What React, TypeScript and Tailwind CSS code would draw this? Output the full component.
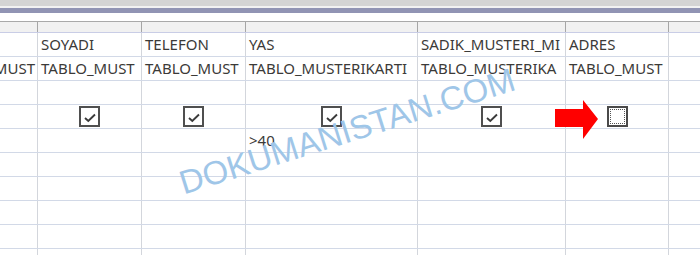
const cols = ["w-[38px]", "w-[104px]", "w-[104px]", "w-[172px]", "w-[148px]", "w-[103px]", "flex-1"];

const fields = ["", "SOYADI", "TELEFON", "YAS", "SADIK_MUSTERI_MI", "ADRES", ""];
const tables = ["TABLO_MUST", "TABLO_MUST", "TABLO_MUST", "TABLO_MUSTERIKARTI", "TABLO_MUSTERIKA", "TABLO_MUST", ""];
const shown = [null, true, true, true, true, false, null];

function CheckBox({ checked }: { checked: boolean }) {
  if (!checked) {
    return (
      <div className="flex h-[21px] w-[21px] items-center justify-center border-2 border-[#4a4a4a] bg-white">
        <div className="h-[15px] w-[15px] border border-dotted border-[#555]" />
      </div>
    );
  }
  return (
    <div className="flex h-[21px] w-[21px] items-center justify-center border-2 border-[#4f4f4f] bg-white">
      <svg width="12" height="10" viewBox="0 0 12 10" className="mt-[2px]">
        <path d="M1 5 L4.3 8 L11 1.5" fill="none" stroke="#3a3a3a" strokeWidth="1.9" />
      </svg>
    </div>
  );
}

function Row({ children, last }: { children: React.ReactNode[]; last?: boolean }) {
  return (
    <div className={`flex h-[24px] ${last ? "" : "border-b border-[#d2d9e7]"}`}>
      {children.map((c, i) => (
        <div
          key={i}
          className={`${cols[i]} flex h-full shrink-0 items-center overflow-hidden whitespace-nowrap ${i < 6 ? "border-r border-[#d3d6dc]" : ""}`}
        >
          {c}
        </div>
      ))}
    </div>
  );
}

export default function App() {
  return (
    <div
      className="relative h-[255px] w-[700px] overflow-hidden bg-white text-[15px] text-[#3b3a38]"
      style={{ fontFamily: '"Noto Sans", "Open Sans", sans-serif' }}
    >
      <div className="h-[6px] bg-[#d4d4d4]" />
      <div className="h-[2px] bg-[#f2f2f2]" />
      <div className="h-[5px] bg-[#9194b4]" />
      <div className="h-[8px] bg-white" />

      {/* column selector band */}
      <div className="flex h-[12px] border-y border-t-[#a9a9a9] border-b-[#c9cde6] border-b-dotted bg-[#f1f1f1]">
        {cols.map((c, i) => (
          <div key={i} className={`${c} h-full shrink-0 ${i < 6 ? "border-r border-[#a6a6a6]" : ""}`} />
        ))}
      </div>

      <Row>
        {fields.map((f, i) => (
          <span key={i} className="pl-[3px]">{f}</span>
        ))}
      </Row>
      <Row>
        {tables.map((t, i) =>
          i === 0 ? (
            <div key={i} className="flex w-full justify-end pr-[2px]">
              <span>{t}</span>
            </div>
          ) : (
            <span key={i} className="pl-[3px]">{t}</span>
          )
        )}
      </Row>
      <Row>{cols.map((_, i) => <span key={i} />)}</Row>
      <Row>
        {shown.map((s, i) => (
          <div key={i} className="flex w-full justify-center">
            {s === null ? null : <CheckBox checked={s} />}
          </div>
        ))}
      </Row>
      <Row>
        {cols.map((_, i) => (
          <span key={i} className="pl-[3px]">{i === 3 ? ">40" : ""}</span>
        ))}
      </Row>
      {[0, 1, 2, 3].map((r) => (
        <Row key={r}>{cols.map((_, i) => <span key={i} />)}</Row>
      ))}
      <Row last>{cols.map((_, i) => <span key={i} />)}</Row>

      {/* red arrow */}
      <svg className="absolute left-[555px] top-[100px]" width="44" height="40" viewBox="0 0 44 40">
        <polygon points="0,9 28,9 28,0 43,19 28,39 28,27 0,27" fill="#ff0000" />
      </svg>

      {/* watermark */}
      <div
        className="pointer-events-none absolute left-[347px] top-[131px] -translate-x-1/2 -translate-y-1/2 -rotate-[17.5deg] whitespace-nowrap text-[33px] leading-none text-[#9fc6e8]"
        style={{ fontFamily: '"Liberation Sans", Arial, sans-serif' }}
      >
        DOKUMANISTAN.COM
      </div>
    </div>
  );
}
